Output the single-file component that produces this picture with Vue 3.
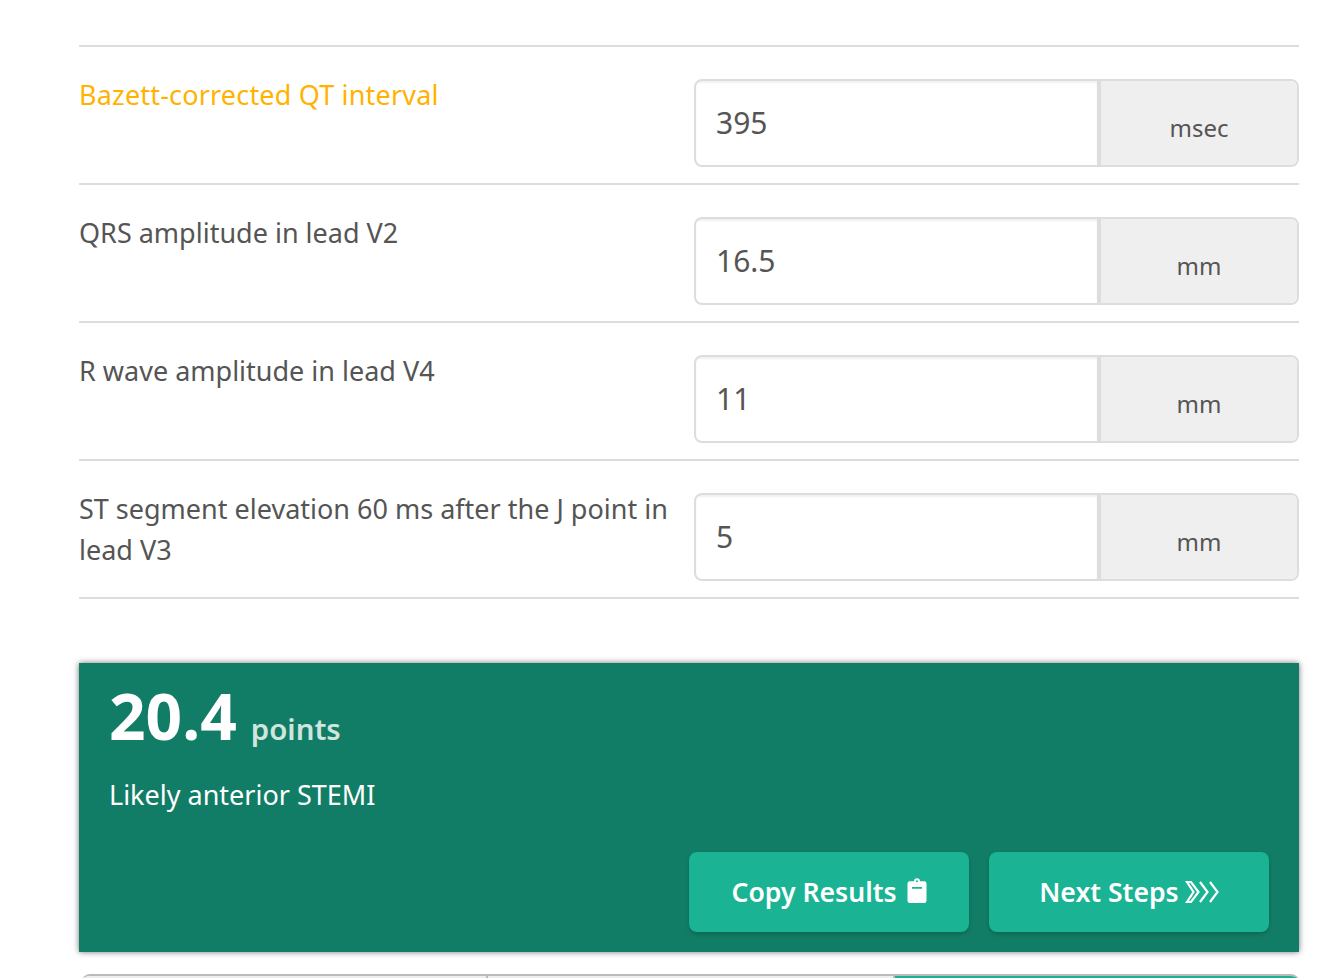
<script setup>
const rows = [
  { label: 'Bazett-corrected QT interval', value: '395', unit: 'msec', active: true },
  { label: 'QRS amplitude in lead V2', value: '16.5', unit: 'mm' },
  { label: 'R wave amplitude in lead V4', value: '11', unit: 'mm' },
  { label: 'ST segment elevation 60 ms after the J point in lead V3', value: '5', unit: 'mm' },
]
</script>

<template>
  <main class="page">
    <section class="rows">
      <div v-for="row in rows" :key="row.label" class="row">
        <div class="label" :class="{ active: row.active }">{{ row.label }}</div>
        <div class="field">
          <div class="value">{{ row.value }}</div>
          <div class="unit">{{ row.unit }}</div>
        </div>
      </div>
    </section>

    <section class="result">
      <div class="score"><span class="num">20.4</span><span class="pts">points</span></div>
      <div class="desc">Likely anterior STEMI</div>
      <div class="actions">
        <button class="btn copy">Copy Results
          <svg class="clip" width="20" height="26" viewBox="0 0 20 26"><path fill="#fff" fill-rule="evenodd" d="M7 3.200a3 3 0 0 1 6 0h4.200A2.200 2.200 0 0 1 19.500 5.400v17.400a2.200 2.200 0 0 1-2.200 2.200H2.700A2.200 2.200 0 0 1 .5 22.800V5.400A2.200 2.200 0 0 1 2.700 3.200H7zM9 3.300a1 1 0 0 0 2 0a1 1 0 0 0-2 0zM5 9v1.800h10V9H5z"/></svg>
        </button>
        <button class="btn next">Next Steps
          <svg class="chev" width="34" height="24" viewBox="0 0 34 24"><g fill="none" stroke="#fff" stroke-width="2.200"><path d="M2 2h4l7.500 10-7.500 10H2l6.500-10z"/><path d="M15 2l7.500 10-7.500 10"/><path d="M25 2l7.500 10-7.500 10"/></g></svg>
        </button>
      </div>
    </section>

    <nav class="tabs">
      <div class="tab"></div>
      <div class="tab"></div>
      <div class="tab on"></div>
    </nav>
  </main>
</template>

<style>
html, body { margin: 0; background: #fff; overflow: hidden; height: 978px; }
</style>

<style scoped>
.page {
  box-sizing: border-box;
  width: 1344px;
  height: 978px;
  overflow: hidden;
  padding: 45px 45px 0 79px;
  font-family: "Noto Sans", sans-serif;
  color: #555;
}
.rows { border-top: 2px solid #ddd; }
.row {
  display: grid;
  grid-template-columns: 615px 605px;
  height: 136px;
  border-bottom: 2px solid #ddd;
}
.label {
  margin-top: 27px;
  font-size: 27px;
  line-height: 41px;
  padding-right: 5px;
}
.label.active { color: #ffb300; letter-spacing: .18px; }
.field {
  box-sizing: border-box;
  height: 88px;
  margin-top: 32px;
  display: flex;
  border: 2px solid #ddd;
  border-radius: 8px;
  overflow: hidden;
}
.value {
  flex: 1;
  padding: 7px 0 0 20px;
  font-size: 30px;
  line-height: 70px;
  box-shadow: inset 0 2px 2px rgba(0,0,0,.06);
}
.unit {
  box-sizing: border-box;
  width: 200px;
  background: #efefef;
  border-left: 4px solid #ddd;
  text-align: center;
  font-size: 24px;
  line-height: 94px;
}
.result {
  box-sizing: border-box;
  height: 289px;
  margin-top: 64px;
  padding: 17px 30px 0;
  background: #127d66;
  color: #fff;
  box-shadow: 0 0 6px rgba(0,0,0,.55);
}
.score { display: flex; align-items: baseline; gap: 14px; line-height: 72px; }
.num { font-size: 64px; font-weight: 700; }
.pts { font-size: 29.4px; font-weight: 600; color: #cfe5de; }
.desc { margin-top: 10px; font-size: 27px; line-height: 40px; }
.actions {
  display: flex;
  justify-content: flex-end;
  gap: 20px;
  margin-top: 37px;
}
.btn {
  width: 280px;
  height: 80px;
  display: flex;
  align-items: center;
  justify-content: center;
  border: 0;
  border-radius: 8px;
  background: #1ab394;
  color: #fff;
  font: 600 26.6px "Noto Sans", sans-serif;
  box-shadow: 0 2px 4px rgba(0,0,0,.2);
}
.copy { gap: 10px; }
.next { gap: 6px; }
.clip { margin-bottom: 2px; }
.tabs {
  display: flex;
  height: 20px;
  margin: 22px 0 0 3px;
  border-top: 2px solid #bbb;
  border-radius: 8px 8px 0 0;
  overflow: hidden;
}
.tab { flex: 1; background: #eee; border-left: 2px solid #bbb; }
.tab:first-child { border-left: 0; }
.tab.on { background: #1ab394; }
</style>
